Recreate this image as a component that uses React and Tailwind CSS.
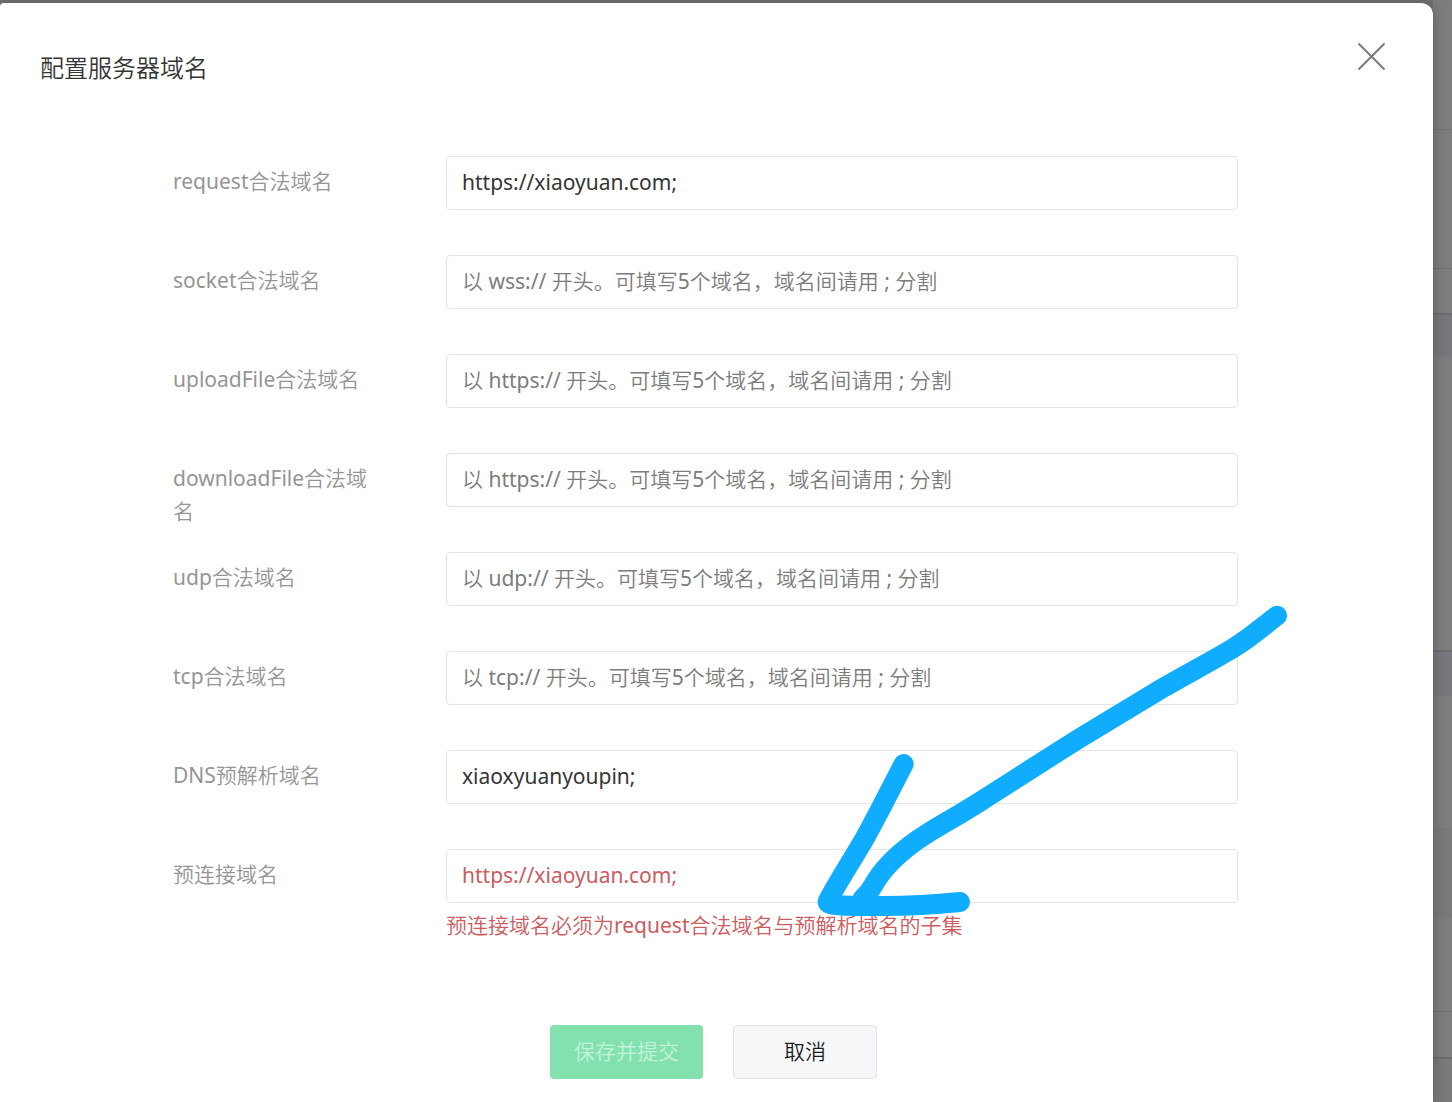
import React, { useState } from 'react';

const httpsHint = '以 https:// 开头。可填写5个域名，域名间请用 ; 分割';

const FIELDS = [
  { id: 'request', label: 'request合法域名', placeholder: httpsHint },
  { id: 'socket', label: 'socket合法域名', placeholder: '以 wss:// 开头。可填写5个域名，域名间请用 ; 分割' },
  { id: 'uploadFile', label: 'uploadFile合法域名', placeholder: httpsHint },
  { id: 'downloadFile', label: 'downloadFile合法域名', placeholder: httpsHint },
  { id: 'udp', label: 'udp合法域名', placeholder: '以 udp:// 开头。可填写5个域名，域名间请用 ; 分割' },
  { id: 'tcp', label: 'tcp合法域名', placeholder: '以 tcp:// 开头。可填写5个域名，域名间请用 ; 分割' },
  { id: 'dns', label: 'DNS预解析域名' },
  { id: 'preconnect', label: '预连接域名', error: '预连接域名必须为request合法域名与预解析域名的子集' }
];

// Page rows that show through the mask, right of the dialog
const Backdrop = () => (
  <div className="flex w-[19px] shrink-0 flex-col bg-[#7d7d7d]">
    <div className="h-[130px] border-b border-[#6f6f76]" />
    <div className="h-[139px] border-b border-[#707070]" />
    <div className="h-[46px] border-b-2 border-[#6d6d74]" />
    <div className="h-[42px] bg-[#77777d]" />
    <div className="h-[295px] border-b-2 border-[#6c6c73]" />
    <div className="h-[44px] bg-[#77777d]" />
    <div className="h-[132px]" />
    <div className="h-[90px] bg-[#797979]" />
    <div className="h-[94px] border-b border-[#6e6e6e]" />
    <div className="h-[47px] border-b-2 border-[#6d6d70]" />
    <div className="flex-1 bg-[#79797c]" />
  </div>
);

const ArrowMark = () => (
  <svg
    className="pointer-events-none absolute top-[587px] left-[800px] h-[360px] w-[500px]"
    viewBox="0 0 1500 1080"
    fill="none"
    stroke="#10adff"
    strokeWidth="60"
    strokeLinecap="round"
    strokeLinejoin="round"
    aria-hidden="true"
  >
    <path d="M1431 77 C1385 112 1350 144 1300 174 C1235 214 1165 249 1090 293 C1010 341 930 389 850 438 C740 506 640 572 535 638 C450 692 405 712 345 755 C275 806 240 850 221 884 C210 905 200 915 188 925" />
    <path d="M311 522 C270 600 230 682 190 752 C150 820 105 890 84 932 C78 945 95 948 250 948 C330 948 410 943 480 936" />
  </svg>
);

const App = () => {
  const [values, setValues] = useState({
    request: 'https://xiaoyuan.com;',
    dns: 'xiaoxyuanyoupin;',
    preconnect: 'https://xiaoyuan.com;'
  });

  return (
    <div className="flex min-h-screen bg-[#737373] font-['Noto_Sans','Noto_Sans_CJK_SC_DemiLight','Noto_Sans_CJK_SC_Light','Noto_Sans_CJK_SC',sans-serif] text-[21px]">
      <main
        role="dialog"
        aria-labelledby="dialog-title"
        className="relative mt-[3px] flex-1 rounded-tl rounded-tr-xl bg-white shadow-[0_0_14px_rgba(0,0,0,0.25)]"
      >
        <header className="flex items-start justify-between pt-[38px] pr-[46px] pl-10">
          <h1 id="dialog-title" className="pt-2 text-2xl leading-[38px] text-[#353535]">
            配置服务器域名
          </h1>
          <button type="button" aria-label="关闭" className="cursor-pointer text-[#7a7a7a]">
            <svg className="size-8" viewBox="0 0 32 32" stroke="currentColor" strokeWidth="2" aria-hidden="true">
              <path d="M3.500 2.500L29.500 28.500M29.500 2.500L3.500 28.500" />
            </svg>
          </button>
        </header>

        <form className="pt-[69px]" onSubmit={e => e.preventDefault()}>
          <div className="pr-[195px] pl-[173px]">
            {FIELDS.map(f => (
              <div key={f.id} className="flex min-h-[99px] items-start gap-[73px]">
                <label htmlFor={f.id} className="w-[200px] shrink-0 pt-[9px] leading-[33px] text-[#959595]">
                  {f.label}
                </label>
                <div className="min-w-0 flex-1">
                  <input
                    id={f.id}
                    type="text"
                    value={values[f.id] || ''}
                    placeholder={f.placeholder}
                    aria-invalid={!!f.error}
                    onChange={e => setValues({ ...values, [f.id]: e.target.value })}
                    className={`block h-[54px] w-full rounded border border-[#e4e4e4] px-[15px] pb-0.5 outline-none placeholder:text-[#7c7c7c] ${
                      f.error ? 'text-[#cb5c5f]' : 'text-[#353535]'
                    }`}
                  />
                  {f.error && <p className="pt-1.5 leading-[33px] text-[#cb5c5f]">{f.error}</p>}
                </div>
              </div>
            ))}
          </div>

          <div className="flex justify-center gap-[30px] pt-[77px] pr-1.5 pb-[23px]">
            <button
              type="submit"
              disabled
              className="h-[54px] w-[153px] rounded bg-[#83e1b0] text-[#c3f3d9]"
            >
              保存并提交
            </button>
            <button
              type="button"
              className="h-[54px] w-[144px] cursor-pointer rounded border border-[#e3e4e6] bg-[#f6f7f9] text-[#1c1c1e]"
            >
              取消
            </button>
          </div>
        </form>

        <ArrowMark />
      </main>
      <Backdrop />
    </div>
  );
};

export default App;
